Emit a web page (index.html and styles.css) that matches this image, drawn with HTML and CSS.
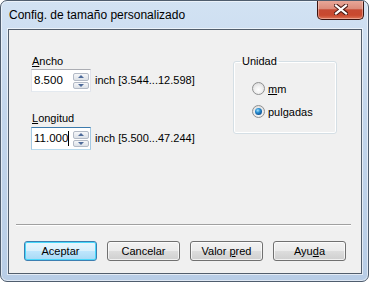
FILE: index.html
```html
<!DOCTYPE html>
<html>
<head>
<meta http-equiv="Content-Type" content="text/html; charset=UTF-8" />
<link rel="stylesheet" href="styles.css">
</head>

<body>

<div class="window">
	<div class="titlebar">
		<span class="title">Config. de tamaño personalizado</span>
		<div class="close">
			<svg width="14" height="11" viewBox="0 0 14 11">
				<path d="M2 1.5 L12 9.5 M12 1.5 L2 9.5" stroke="#4a1a14" stroke-width="4.2" stroke-linecap="square" fill="none" />
				<path d="M2 1.5 L12 9.5 M12 1.5 L2 9.5" stroke="#ffffff" stroke-width="2.2" stroke-linecap="square" fill="none" />
			</svg>
		</div>
	</div>

	<div class="client">
		<div class="fields">
			<div class="sizes">
				<div class="label"><u>A</u>ncho</div>
				<div class="row">
					<div class="edit">
						<span class="value">8.500</span>
						<div class="arrows"><span class="arrow up"></span><span class="arrow down"></span></div>
					</div>
					<span class="range">inch [3.544...12.598]</span>
				</div>

				<div class="label second"><u>L</u>ongitud</div>
				<div class="row">
					<div class="edit focused">
						<span class="value">11.000<span class="caret"></span></span>
						<div class="arrows"><span class="arrow up"></span><span class="arrow down"></span></div>
					</div>
					<span class="range">inch [5.500...47.244]</span>
				</div>
			</div>

			<fieldset class="unit">
				<legend>Unidad</legend>
				<div class="radios">
					<div class="radio"><span class="circle"></span><span><u>m</u>m</span></div>
					<div class="radio"><span class="circle checked"></span><span>pul<u>g</u>adas</span></div>
				</div>
			</fieldset>
		</div>

		<div class="separator"></div>

		<div class="buttons">
			<div class="button default">Aceptar</div>
			<div class="button">Cancelar</div>
			<div class="button">Valor <u>p</u>red</div>
			<div class="button">Ayu<u>d</u>a</div>
		</div>
	</div>
</div>

</body>
</html>
```

FILE: styles.css
```css
body {
	margin: 0;
	font-family: "Liberation Sans", Arial, sans-serif;
	font-size: 12px;
	color: #000000;
}

.window {
	width: 369px;
	height: 282px;
	box-sizing: border-box;
	border: 1px solid #4f5d6e;
	border-radius: 7px;
	background: linear-gradient(to bottom, #d2e2f3 0%, #c3d6ec 40%, #b8cde6 100%);
	box-shadow: inset 0 0 0 1px rgba(255, 255, 255, 0.55);
	display: flex;
	flex-direction: column;
	overflow: hidden;
}

.titlebar {
	height: 28px;
	display: flex;
	justify-content: space-between;
	align-items: flex-start;
}

.title {
	padding: 7px 0 0 8px;
	line-height: 15px;
}

.close {
	width: 47px;
	height: 20px;
	box-sizing: border-box;
	margin: -1px 4px 0 0;
	border: 1px solid #3b1410;
	border-top: none;
	border-radius: 0 0 5px 5px;
	background: linear-gradient(to bottom, #e9aa9c 0%, #dc8c7b 45%, #c64a33 52%, #c9492f 80%, #dc7558 100%);
	box-shadow: inset 0 0 0 1px rgba(255, 220, 210, 0.45);
	display: flex;
	align-items: center;
	justify-content: center;
}

.client {
	flex: 1;
	margin: 0 6px 7px 7px;
	background-color: #f0f0f0;
	border: 1px solid #525e6c;
	box-shadow: 0 0 0 1px rgba(255, 255, 255, 0.6);
	display: flex;
	flex-direction: column;
	font-size: 11px;
}

.fields {
	display: flex;
	padding: 24px 0 0 22px;
}

.sizes {
	width: 202px;
}

.label {
	line-height: 15px;
	padding-left: 1px;
}

.label.second {
	margin-top: 19px;
	margin-bottom: 1px;
}

.row {
	display: flex;
	align-items: center;
}

.edit {
	width: 60px;
	height: 23px;
	box-sizing: border-box;
	background-color: #ffffff;
	border: 1px solid #e2e3ea;
	border-top-color: #abadb3;
	border-bottom-color: #e3e9ef;
	display: flex;
	font-size: 11.5px;
}

.edit.focused {
	border-color: #a4c9e3;
	border-top-color: #3d7bad;
	border-bottom-color: #b7d9ed;
}

.value {
	flex: 1;
	line-height: 21px;
	padding-left: 2px;
	display: flex;
	align-items: center;
}

.caret {
	display: inline-block;
	width: 1px;
	height: 15px;
	background-color: #000000;
}

.arrows {
	width: 17px;
	display: flex;
	flex-direction: column;
	gap: 1px;
	padding: 3px 1px 2px 0;
	box-sizing: border-box;
}

.arrow {
	flex: 1;
	border: 1px solid #b3bac6;
	border-radius: 2px;
	background: linear-gradient(to bottom, #f6f7f9 0%, #e9ecf0 50%, #dce1e7 100%);
	display: flex;
	align-items: center;
	justify-content: center;
}

.arrow::after {
	content: "";
	border-left: 3px solid transparent;
	border-right: 3px solid transparent;
}

.arrow.up::after {
	border-bottom: 3px solid #4e6b9a;
}

.arrow.down::after {
	border-top: 3px solid #4e6b9a;
}

.range {
	margin-left: 4px;
	line-height: 15px;
}

.unit {
	margin: 0;
	width: 104px;
	height: 80px;
	box-sizing: border-box;
	padding: 0;
	border: 1px solid #d5dfe5;
	border-radius: 3px;
	box-shadow: inset 0 0 0 1px #ffffff;
}

.unit legend {
	margin-left: 6px;
	padding: 0 2px;
	line-height: 15px;
}

.radios {
	padding: 12px 0 0 18px;
}

.radio {
	display: flex;
	align-items: center;
	gap: 3px;
	height: 15px;
	margin-bottom: 8px;
}

.circle {
	width: 13px;
	height: 13px;
	box-sizing: border-box;
	border-radius: 50%;
	border: 1px solid #8f9091;
	background: radial-gradient(circle at 50% 60%, #ffffff 0%, #f1f1f1 40%, #d4d4d4 100%);
	display: flex;
	align-items: center;
	justify-content: center;
}

.circle.checked::after {
	content: "";
	width: 7px;
	height: 7px;
	border-radius: 50%;
	background: radial-gradient(circle at 40% 35%, #a6e3fb 0%, #2b8fd2 35%, #0d5293 75%, #0a3a6c 100%);
}

.separator {
	margin: auto 10px 0 7px;
	border-top: 1px solid #a0a0a0;
	border-bottom: 1px solid #ffffff;
}

.buttons {
	display: flex;
	gap: 10px;
	padding: 15px 0 12px 15px;
}

.button {
	width: 73px;
	height: 20px;
	box-sizing: border-box;
	border: 1px solid #707070;
	border-radius: 3px;
	background: linear-gradient(to bottom, #f2f2f2 0%, #ebebeb 49%, #dddddd 51%, #cfcfcf 100%);
	box-shadow: inset 0 0 0 1px rgba(255, 255, 255, 0.7);
	line-height: 18px;
	text-align: center;
}

.button.default {
	border-color: #3c7fb1;
	background: linear-gradient(to bottom, #eaf6fd 0%, #d9f0fc 49%, #bee6fd 51%, #a7d9f5 100%);
	box-shadow: inset 0 0 0 1px #48d8fb;
}
```
